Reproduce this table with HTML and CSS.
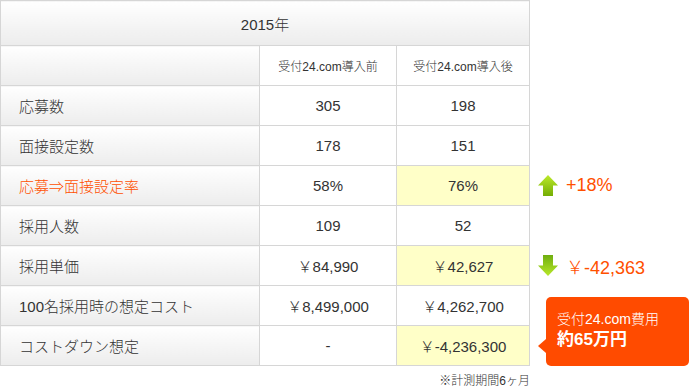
FILE: index.html
```html
<!DOCTYPE html>
<html lang="ja">
<head>
<meta charset="utf-8">
<link rel="stylesheet" href="styles.css">
</head>
<body>
<div class="wrap">
<table class="cmp">
  <colgroup>
    <col class="c-label"><col class="c-before"><col class="c-after"><col class="c-note">
  </colgroup>
  <tr class="r-year">
    <th colspan="3" class="year">2015年</th>
    <td class="side"></td>
  </tr>
  <tr class="r-head">
    <th class="lab"></th>
    <th class="colh">受付24.com導入前</th>
    <th class="colh">受付24.com導入後</th>
    <td class="side"></td>
  </tr>
  <tr>
    <th class="lab">応募数</th><td>305</td><td>198</td><td class="side"></td>
  </tr>
  <tr>
    <th class="lab">面接設定数</th><td>178</td><td>151</td><td class="side"></td>
  </tr>
  <tr>
    <th class="lab hot">応募⇒面接設定率</th><td>58%</td><td class="hl">76%</td>
    <td class="side">
      <div class="delta">
        <svg class="arrow" width="20" height="21" viewBox="0 0 20 21">
          <defs><linearGradient id="gu" x1="0" y1="0" x2="0" y2="1"><stop offset="0" stop-color="#bdea2a"/><stop offset="1" stop-color="#74ad05"/></linearGradient></defs>
          <path d="M10 0 L20 10.5 L15 10.5 L15 21 L5 21 L5 10.5 L0 10.5 Z" fill="url(#gu)"/>
        </svg>
        <span class="dv">+18%</span>
      </div>
    </td>
  </tr>
  <tr>
    <th class="lab">採用人数</th><td>109</td><td>52</td><td class="side"></td>
  </tr>
  <tr>
    <th class="lab">採用単価</th><td>￥84,990</td><td class="hl">￥42,627</td>
    <td class="side">
      <div class="delta">
        <svg class="arrow" width="20" height="21" viewBox="0 0 20 21">
          <defs><linearGradient id="gd" x1="0" y1="0" x2="0" y2="1"><stop offset="0" stop-color="#6fae10"/><stop offset="1" stop-color="#b8e82a"/></linearGradient></defs>
          <path d="M5 0 L15 0 L15 10.5 L20 10.5 L10 21 L0 10.5 L5 10.5 Z" fill="url(#gd)"/>
        </svg>
        <span class="dv">￥-42,363</span>
      </div>
    </td>
  </tr>
  <tr>
    <th class="lab">100名採用時の想定コスト</th><td>￥8,499,000</td><td>￥4,262,700</td>
    <td class="side bubble-cell" rowspan="2">
      <div class="bubble">
        <span class="b1">受付24.com費用</span>
        <span class="b2">約65万円</span>
      </div>
    </td>
  </tr>
  <tr>
    <th class="lab">コストダウン想定</th><td>-</td><td class="hl">￥-4,236,300</td>
  </tr>
</table>
<p class="foot">※計測期間6ヶ月</p>
</div>
</body>
</html>
```

FILE: styles.css
```css
html, body {
  margin: 0;
  padding: 0;
  background: #fff;
}
body {
  font-family: "Liberation Sans", "Noto Sans CJK JP", sans-serif;
  color: #333;
}
.wrap {
  width: 700px;
}
.cmp {
  border-collapse: collapse;
  table-layout: fixed;
  width: 700px;
}
.c-label { width: 259px; }
.c-before { width: 137px; }
.c-after { width: 133px; }
.c-note { width: 171px; }

.cmp th, .cmp td {
  border: 1px solid #d6d6d6;
  height: 39px;
  padding: 0;
  font-size: 15px;
  font-weight: 300;
  text-align: center;
  vertical-align: middle;
  background: #fff;
}
.cmp .side {
  border: none;
  background: transparent;
  text-align: left;
}
.r-year th {
  height: 44px;
  background: linear-gradient(#ffffff, #ececec);
  font-size: 15px;
}
.lab {
  background: linear-gradient(#ffffff, #ececec) !important;
  text-align: left !important;
  padding-left: 18px !important;
}
.r-head th {
  font-size: 12px;
}
.r-head .colh {
  background: #fff;
}
.hot {
  color: #ff5000;
}
.cmp td.hl {
  background: #ffffc8;
}
.delta {
  display: flex;
  align-items: center;
  gap: 8px;
  padding-left: 8px;
}
.arrow {
  display: block;
}
.dv {
  color: #ff5000;
  font-size: 18px;
  font-weight: 300;
}
.bubble-cell {
  vertical-align: bottom !important;
}
.bubble {
  position: relative;
  margin-left: 16px;
  width: 143px;
  height: 69px;
  box-sizing: border-box;
  background: #ff4b00;
  border-radius: 5px;
  color: #fff;
  padding: 14px 0 0 11px;
  display: flex;
  flex-direction: column;
  gap: 3px;
}
.bubble::before {
  content: "";
  position: absolute;
  left: -8px;
  top: 42px;
  border-style: solid;
  border-width: 7px 8px 7px 0;
  border-color: transparent #ff4b00 transparent transparent;
}
.b1 {
  font-size: 14px;
  line-height: 16px;
}
.b2 {
  font-size: 17px;
  line-height: 20px;
  font-weight: bold;
}
.foot {
  margin: 8px 0 0;
  width: 530px;
  text-align: right;
  font-size: 12px;
  line-height: 14px;
  color: #333;
  font-weight: 300;
}
```
